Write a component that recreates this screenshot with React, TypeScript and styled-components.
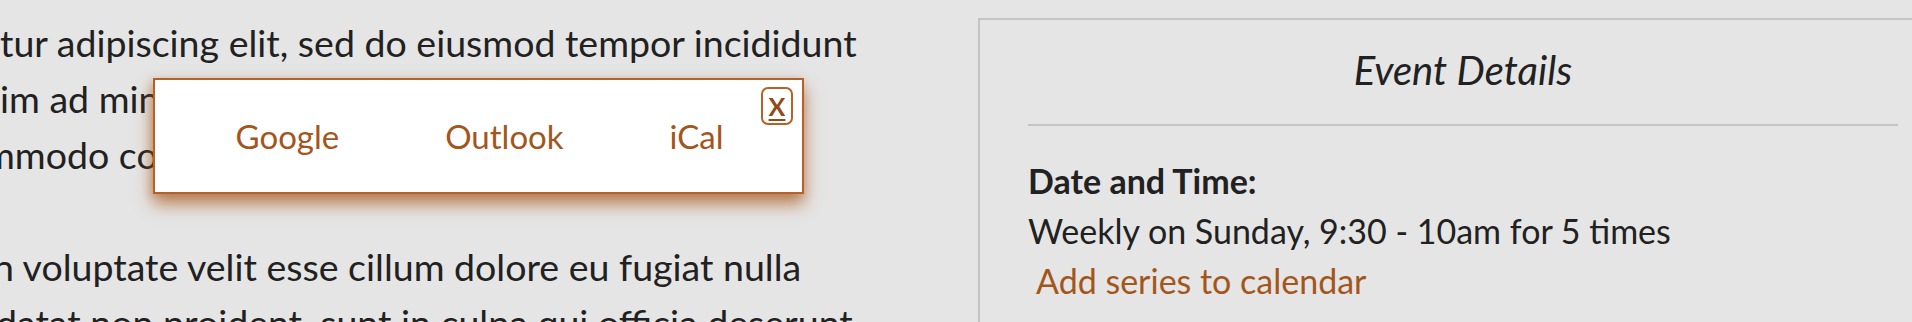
import React from "react";
import styled, { createGlobalStyle } from "styled-components";

const Global = createGlobalStyle`
  html, body {
    margin: 0;
    padding: 0;
    background: #e5e5e5;
    overflow: hidden;
  }
  body {
    font-family: Lato, "Liberation Sans", sans-serif;
    color: #212121;
  }
`;

const BRAND = "#a3561c";
const BORDER_BRAND = "#b4612a";
const GREY_LINE = "#c4c4c4";

const Page = styled.div`
  display: flex;
  align-items: flex-start;
  gap: 98px;
  padding-top: 18px;
  width: 1948px;
  height: 322px;
  box-sizing: border-box;
`;

const Main = styled.main`
  position: relative;
  flex: 0 0 880px;
  margin-top: -3px;
`;

const Paragraph = styled.p`
  margin: 0 0 56px;
  font-size: 37.5px;
  line-height: 56px;
`;

const Line = styled.span<{ $shift?: number }>`
  display: block;
  white-space: nowrap;
  margin-left: ${(p) => -(p.$shift ?? 0)}px;
`;

const Popup = styled.div`
  position: absolute;
  left: 153px;
  top: 63px;
  width: 651px;
  height: 116px;
  box-sizing: border-box;
  background: #fff;
  border: 2px solid ${BORDER_BRAND};
  box-shadow: 0 10px 16px rgba(170, 88, 28, 0.7), -2px 2px 8px rgba(170, 88, 28, 0.25);
  display: flex;
  align-items: center;
  justify-content: center;
  gap: 106px;
  padding: 0 0 0 2px;
`;

const CalLink = styled.a`
  font-size: 33px;
  line-height: 40px;
  color: ${BRAND};
  text-decoration: none;
  cursor: pointer;
`;

const Close = styled.button`
  position: absolute;
  top: 7px;
  right: 9px;
  width: 32px;
  height: 38px;
  box-sizing: border-box;
  padding: 0;
  background: #fff;
  border: 2px solid ${BORDER_BRAND};
  border-radius: 7px;
  color: #8f4a16;
  font-family: Lato, "Liberation Sans", sans-serif;
  font-weight: 700;
  font-size: 25px;
  line-height: 30px;
  text-decoration: underline;
  text-underline-offset: 3px;
  text-decoration-thickness: 2px;
  cursor: pointer;
`;

const Sidebar = styled.aside`
  flex: 0 0 970px;
  box-sizing: border-box;
  border: 2px solid ${GREY_LINE};
  border-bottom: none;
  padding: 0 48px;
  height: 320px;
`;

const Title = styled.h3`
  margin: 26px 0 0;
  font-size: 40px;
  line-height: 48px;
  font-style: italic;
  font-weight: 400;
  text-align: center;
`;

const Divider = styled.hr`
  margin: 30px 0 0;
  border: none;
  border-top: 2px solid ${GREY_LINE};
  height: 0;
`;

const Detail = styled.div`
  margin-top: 30px;
  font-size: 34px;
  line-height: 50px;
`;

const Label = styled.div`
  font-weight: 700;
`;

const SeriesLink = styled.a`
  display: block;
  padding-left: 8px;
  color: ${BRAND};
  text-decoration: none;
`;

export default function App() {
  return (
    <>
      <Global />
      <Page>
        <Main>
          <Paragraph>
            <Line>tur adipiscing elit, sed do eiusmod tempor incididunt</Line>
            <Line>im ad minim veniam, quis nostrud</Line>
            <Line $shift={16}>mmodo consequat. Duis aute irure</Line>
          </Paragraph>
          <Paragraph>
            <Line $shift={7}>n voluptate velit esse cillum dolore eu fugiat nulla</Line>
            <Line $shift={4}>datat non proident, sunt in culpa qui officia deserunt</Line>
          </Paragraph>
          <Popup role="dialog">
            <CalLink>Google</CalLink>
            <CalLink>Outlook</CalLink>
            <CalLink>iCal</CalLink>
            <Close aria-label="Close">X</Close>
          </Popup>
        </Main>
        <Sidebar>
          <Title>Event Details</Title>
          <Divider />
          <Detail>
            <Label>Date and Time:</Label>
            <div>Weekly on Sunday, 9:30 - 10am for 5 times</div>
            <SeriesLink>Add series to calendar</SeriesLink>
          </Detail>
        </Sidebar>
      </Page>
    </>
  );
}
